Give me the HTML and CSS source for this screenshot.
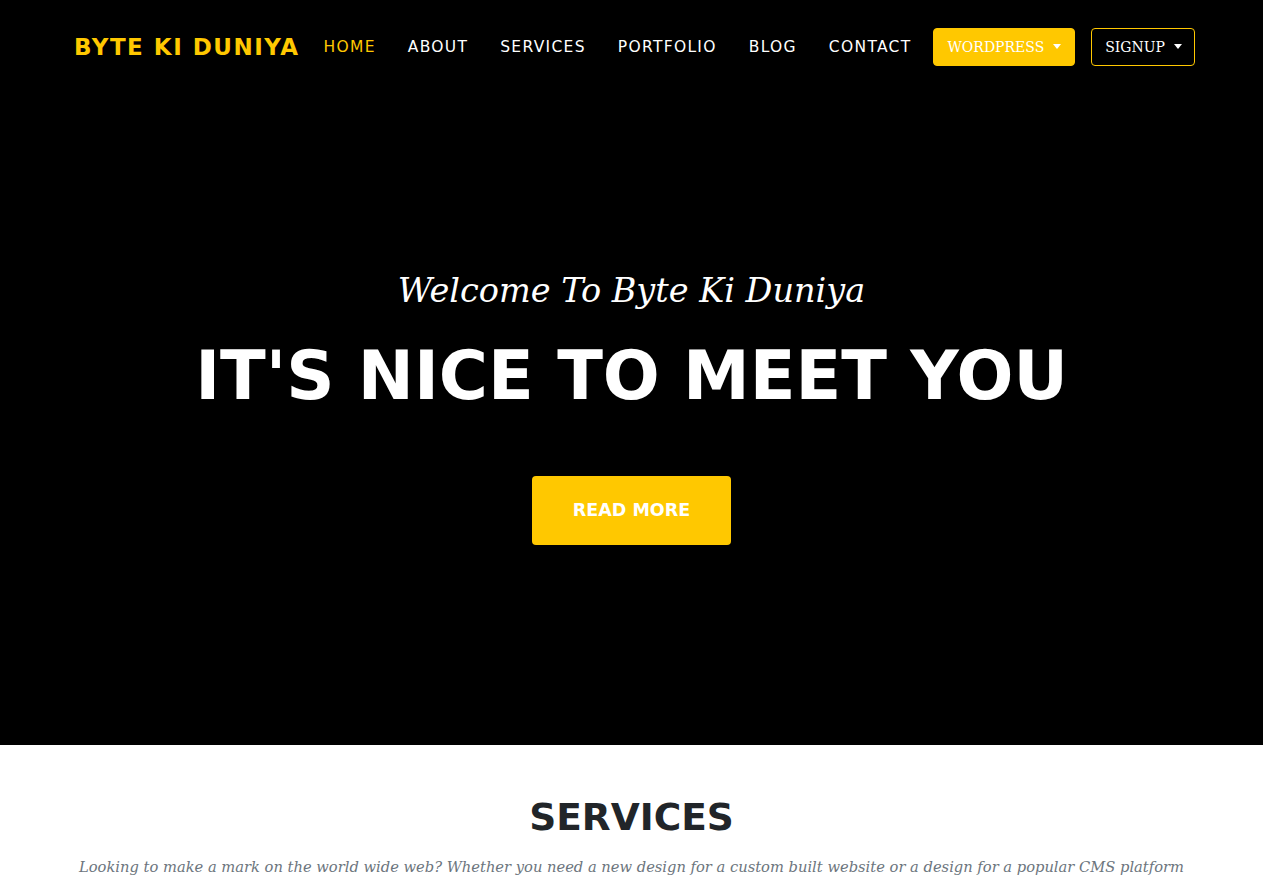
FILE: index.html
```html
<!DOCTYPE html>
<html lang="en">
<head>
<meta charset="utf-8">
<title>Byte Ki Duniya</title>
<link rel="stylesheet" href="styles.css">
</head>
<body>
<header class="hero">
  <nav class="navbar">
    <a class="brand" href="#">BYTE KI DUNIYA</a>
    <ul class="nav-links">
      <li><a class="nav-link active" href="#">HOME</a></li>
      <li><a class="nav-link" href="#">ABOUT</a></li>
      <li><a class="nav-link" href="#">SERVICES</a></li>
      <li><a class="nav-link" href="#">PORTFOLIO</a></li>
      <li><a class="nav-link" href="#">BLOG</a></li>
      <li><a class="nav-link" href="#">CONTACT</a></li>
    </ul>
    <div class="nav-buttons">
      <button class="btn-drop btn-yellow">WORDPRESS</button>
      <button class="btn-drop btn-outline">SIGNUP</button>
    </div>
  </nav>
  <div class="intro">
    <div class="lead-in">Welcome To Byte Ki Duniya</div>
    <h1 class="intro-heading">IT'S NICE TO MEET YOU</h1>
    <a class="btn-xl" href="#">READ MORE</a>
  </div>
</header>
<section class="services">
  <h2 class="section-heading">SERVICES</h2>
  <p class="section-subheading">Looking to make a mark on the world wide web? Whether you need a new design for a custom built website or a design for a popular CMS platform</p>
</section>
</body>
</html>
```
FILE: styles.css
```css
* { box-sizing: border-box; }
html, body { margin: 0; padding: 0; }
body {
  font-family: "DejaVu Sans", sans-serif;
  background: #fff;
  color: #212529;
}
a { text-decoration: none; }

.hero {
  background: #000;
  height: 745px;
  display: flex;
  flex-direction: column;
}

.navbar {
  display: flex;
  align-items: center;
  padding: 28px 68px 28px 74px;
  height: 94px;
}
.brand {
  font-family: "DejaVu Sans", sans-serif;
  font-weight: 700;
  font-size: 23px;
  letter-spacing: 1.5px;
  color: #ffc800;
  white-space: nowrap;
}
.nav-links {
  list-style: none;
  display: flex;
  margin: 0 0 0 auto;
  padding: 0;
}
.nav-link {
  display: block;
  padding: 0 16px;
  font-family: "DejaVu Sans", sans-serif;
  font-size: 15.5px;
  letter-spacing: 1.3px;
  color: #fff;
  line-height: 38px;
}
.nav-link.active { color: #ffc800; }

.nav-buttons {
  display: flex;
  gap: 16px;
  margin-left: 6px;
}
.btn-drop {
  font-family: "DejaVu Serif", serif;
  font-size: 14px;
  line-height: 24px;
  padding: 6px 13px;
  border-radius: 4px;
  border: 1px solid #ffc800;
  color: #fff;
  cursor: pointer;
}
.btn-outline { padding: 6px 12px 6px 13px; }
.btn-drop::after {
  content: "";
  display: inline-block;
  margin-left: 9px;
  vertical-align: 3px;
  border-top: 5px solid #fff;
  border-left: 4.5px solid transparent;
  border-right: 4.5px solid transparent;
}
.btn-yellow { background: #ffc800; }
.btn-outline { background: #000; }

.intro {
  flex: 1;
  display: flex;
  flex-direction: column;
  align-items: center;
  padding-top: 177px;
  color: #fff;
}
.lead-in {
  font-family: "DejaVu Serif", serif;
  font-style: italic;
  font-size: 33.5px;
  line-height: 40px;
  margin-bottom: 28px;
}
.intro-heading {
  margin: 0 0 62px;
  font-family: "DejaVu Sans", sans-serif;
  font-weight: 700;
  font-size: 67px;
  line-height: 75px;
}
.btn-xl {
  display: block;
  width: 199px;
  height: 69px;
  background: #ffc800;
  border-radius: 4px;
  color: #fff;
  font-weight: 700;
  font-size: 17.5px;
  line-height: 69px;
  text-align: center;
}

.services {
  padding-top: 48px;
  text-align: center;
}
.section-heading {
  margin: 0 0 14px;
  font-family: "DejaVu Sans", sans-serif;
  font-weight: 700;
  font-size: 37.5px;
  line-height: 48px;
  color: #212529;
}
.section-subheading {
  margin: 0;
  font-family: "DejaVu Serif", serif;
  font-style: italic;
  font-size: 14.7px;
  line-height: 24px;
  color: #6c757d;
  white-space: nowrap;
}
```
